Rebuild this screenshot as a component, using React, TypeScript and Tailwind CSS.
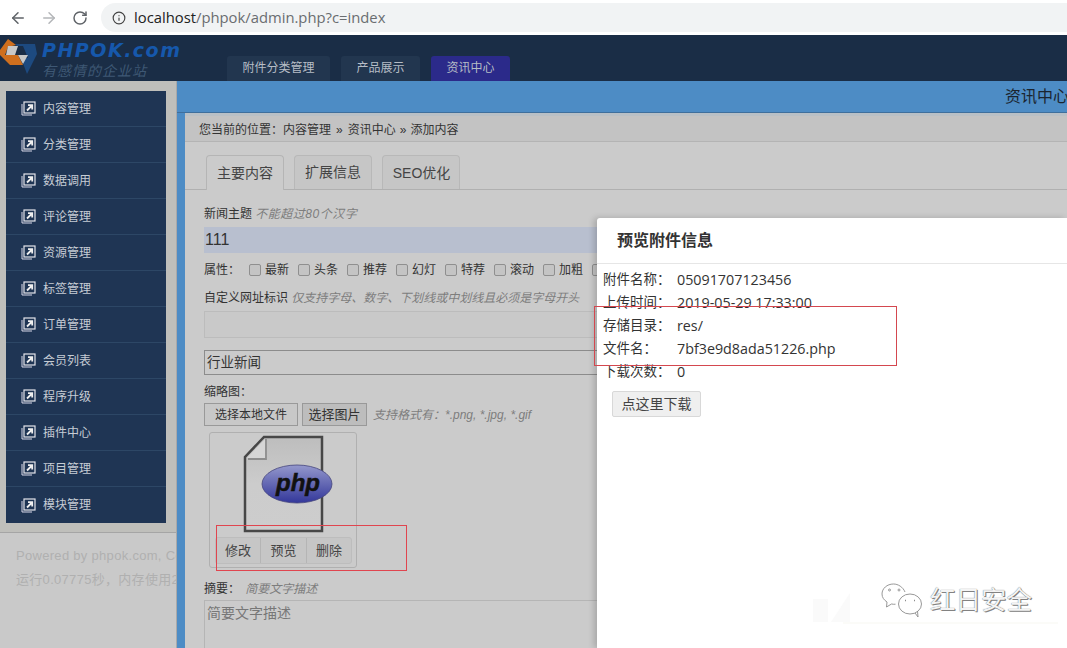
import React from 'react';
import { ArrowLeft, ArrowRight, RotateCw, Info } from 'lucide-react';

const cjk = "font-['Liberation_Sans','Noto_Sans_CJK_SC',sans-serif]";

const menuItems = ['内容管理', '分类管理', '数据调用', '评论管理', '资源管理', '标签管理', '订单管理', '会员列表', '程序升级', '插件中心', '项目管理', '模块管理'];
const attrs = ['最新', '头条', '推荐', '幻灯', '特荐', '滚动', '加粗', ''];
const infoRows = [
  ['附件名称：', '05091707123456'],
  ['上传时间：', '2019-05-29 17:33:00'],
  ['存储目录：', 'res/'],
  ['文件名：', '7bf3e9d8ada51226.php'],
  ['下载次数：', '0'],
];

// little box-with-arrow used by the side menu
const MenuIcon = () => (
  <svg width="15" height="15" viewBox="0 0 15 15" className="shrink-0">
    <path d="M1 3v11h10" fill="none" stroke="#d8d8e8" strokeWidth="1" />
    <rect x="3" y="1" width="11" height="11" fill="#1f3554" stroke="#e4e4ec" strokeWidth="1.2" />
    <path d="M6 9.5 10.5 5M7 4.2h4.2v4.2" fill="none" stroke="#f0f0f0" strokeWidth="1.8" />
  </svg>
);

const Logo = () => (
  <svg width="38" height="44" viewBox="0 0 38 44" className="shrink-0">
    <path d="M15 9H35L37 19 27 39 21 23H28L23 11H17Z" fill="#1d4a80" />
    <path d="M0 15 8 4 16 10 8 12 5 20 0 20Z" fill="#cf6f1e" />
    <path d="M8 11H18L15 20H6Z" fill="#c8c8c8" />
    <path d="M0 20H18L23 30H10Z" fill="#cf6f1e" />
    <path d="M18 20H28L23 29Z" fill="#c8c8c8" />
  </svg>
);

const PhpFile = () => (
  <svg width="90" height="102" viewBox="0 0 90 102">
    <defs>
      <linearGradient id="oval" x1="0" y1="0" x2="0" y2="1">
        <stop offset="0" stopColor="#9498cc" />
        <stop offset="1" stopColor="#33379a" />
      </linearGradient>
      <linearGradient id="sheet" x1="0" y1="0" x2="0" y2="1">
        <stop offset="0" stopColor="#bdbdbd" />
        <stop offset="0.5" stopColor="#cccccc" />
        <stop offset="1" stopColor="#cdcdcd" />
      </linearGradient>
    </defs>
    <path d="M21 2H79V96H2V22Z" fill="url(#sheet)" stroke="#474747" strokeWidth="2.500" />
    <path d="M22 4V23H4Z" fill="#d6d6d6" />
    <path d="M23 4V24H5" fill="none" stroke="#8e8e8e" strokeWidth="1.800" />
    <ellipse cx="54" cy="49" rx="35" ry="19" fill="url(#oval)" stroke="#45457c" strokeWidth="0.800" />
    <text x="55" y="56" textAnchor="middle" fontFamily="'Liberation Sans', sans-serif" fontSize="24" fontWeight="700" fontStyle="italic" fill="#111" stroke="#111" strokeWidth="0.500">php</text>
  </svg>
);

const WeChat = () => (
  <svg width="42" height="36" viewBox="0 0 42 36" fill="none" stroke="#8c8c8c" strokeWidth="0.900">
    <path d="M24 9C22 4 17 1 12.500 1 6 1 1 5.500 1 11c0 3.500 2 6 5 8l-.5 5 5-3c1.500.3 3 .4 4 .2" />
    <ellipse cx="29" cy="21" rx="11.500" ry="10" />
    <path d="M34 30l3 4-.5-6" />
    <circle cx="8.500" cy="7" r="1" />
    <circle cx="18" cy="7" r="1" />
    <path d="M24 17.500h1M33 17.500h1" strokeWidth="1.500" />
  </svg>
);

export default function App() {
  return (
    <div className={`${cjk} relative flex h-[648px] w-[1067px] flex-col overflow-hidden bg-white text-[13px]`}>
      {/* Browser bar */}
      <div className="flex h-[35px] shrink-0 items-center bg-white">
        <ArrowLeft size={18} strokeWidth={2} className="ml-[9px] text-[#5f6368]" />
        <ArrowRight size={18} strokeWidth={2} className="ml-[13px] text-[#b4b6b9]" />
        <RotateCw size={16} strokeWidth={2.200} className="ml-[14px] text-[#5f6368]" />
        <div className="ml-[13px] flex h-[29px] flex-1 items-center rounded-l-full bg-[#f1f3f4] pl-[11px]">
          <Info size={14} strokeWidth={2} className="text-[#444]" />
          <span className="ml-[8px] font-['Open_Sans','Liberation_Sans',sans-serif] text-[14.800px] text-[#6a6d70]">
            <span className="text-[#222]">localhost</span>/phpok/admin.php?c=index
          </span>
        </div>
      </div>

      {/* Header */}
      <div className="flex h-[46px] shrink-0 bg-[#1a2d46]">
        <div className="flex w-[227px] shrink-0 items-start">
          <Logo />
          <div className="ml-[4px] mt-[3px]">
            <div className="font-['DejaVu_Sans',sans-serif] text-[19px] font-bold italic leading-[24px] tracking-[1.500px] text-[#1658ac]">PHPOK.com</div>
            <div className="text-[14px] italic leading-[18px] tracking-[1px] text-[#3e5874]">有感情的企业站</div>
          </div>
        </div>
        <div className="flex items-end gap-[11px] text-[12px] text-[#b6bdc6]">
          <div className="flex h-[25px] w-[103px] items-center justify-center rounded-t-[3px] bg-[#22364f] pb-[2px]">附件分类管理</div>
          <div className="flex h-[25px] w-[79px] items-center justify-center rounded-t-[3px] bg-[#22364f] pb-[2px]">产品展示</div>
          <div className="flex h-[25px] w-[79px] items-center justify-center rounded-t-[3px] bg-[#2b2a8a] pb-[2px]">资讯中心</div>
        </div>
      </div>

      <div className="flex min-h-0 flex-1">
        {/* Sidebar */}
        <div className="flex w-[177px] shrink-0 flex-col border-r border-[#a9a9a9] bg-[#c9c9c9]">
          <div className="h-[452px] border-b border-[#a5a5a5] bg-[#bfbfbb] px-[6px] pt-[10px]">
            <div className="w-[160px] bg-[#1f3554]">
              {menuItems.map((item, i) => (
                <div key={item} className={`flex h-[36px] items-center gap-[7px] pl-[15px] text-[12px] text-[#c6ccd4] ${i < menuItems.length - 1 ? 'border-b border-[#2d4766]' : ''}`}>
                  <MenuIcon />
                  {item}
                </div>
              ))}
            </div>
          </div>
          <div className="overflow-hidden whitespace-nowrap pl-[16px] pt-[11px] text-[13px] leading-[24px] tracking-[0.300px] text-[#b0b0b0]">
            <div>Powered by phpok.com, Copyright</div>
            <div>运行0.07775秒，内存使用2.91MB</div>
          </div>
        </div>

        {/* Main */}
        <div className="flex min-w-0 flex-1 flex-col bg-[#4d8cc5]">
          <div className="flex h-[32px] shrink-0 items-center justify-end border-b border-[#3f6f9c] text-[16px] text-[#1b2530]">
            <span className="-mr-[2px] whitespace-nowrap">资讯中心</span>
          </div>
          <div className="ml-[8px] flex-1 overflow-hidden border-t-[3px] border-[#b9c0c6] bg-[#cbcbcb]">
            <div className="flex h-[26px] items-center border-b border-[#b4b4b4] bg-[#c3c3c3] pl-[14px] pt-[2px] text-[12px] text-[#333]">
              您当前的位置：内容管理
              <span className="mx-[5px]">»</span>
              资讯中心
              <span className="mx-[4px]">»</span>
              添加内容
            </div>
            <div className="flex h-[48px] items-end gap-[10px] border-b border-[#b0b0b0] pl-[21px] text-[14px] text-[#444]">
              <div className="-mb-px flex h-[35px] w-[78px] items-center justify-center rounded-t-[4px] border border-b-0 border-[#b5b5b5] bg-[#cbcbcb]">主要内容</div>
              <div className="flex h-[34px] w-[78px] items-center justify-center rounded-t-[4px] border border-b-0 border-[#b8b8b8] bg-[#c6c6c6]">扩展信息</div>
              <div className="flex h-[34px] w-[78px] items-center justify-center rounded-t-[4px] border border-b-0 border-[#b8b8b8] bg-[#c6c6c6] pl-[1px] pt-[1px]">SEO优化</div>
            </div>

            <div className="pl-[19px] text-[12px] text-[#333]">
              <div className="mt-[16px] h-[21px] leading-[16px]">
                新闻主题 <i className="tracking-[0.500px] text-[#7d7d7d]">不能超过80个汉字</i>
              </div>
              <div className="flex h-[26px] items-center bg-[#b8bfcf] pl-[1px] text-[16px] text-[#333]">111</div>
              <div className="mt-[9px] flex h-[16px] items-center">
                <span className="w-[45px]">属性：</span>
                {attrs.map((a, i) => (
                  <span key={i} className="mr-[6px] flex w-[43px] items-center gap-[4px] whitespace-nowrap">
                    <span className="h-[12px] w-[12px] shrink-0 rounded-[2px] border border-[#8f8f8f] bg-[#c4c4c4]" />
                    {a}
                  </span>
                ))}
              </div>
              <div className="mt-[13px] h-[20px] leading-[14px]">
                自定义网址标识 <i className="text-[#7d7d7d]">仅支持字母、数字、下划线或中划线且必须是字母开头</i>
              </div>
              <div className="h-[27px] border border-[#bcbcbc] bg-[#c9c9c9]" />
              <div className="mt-[12px] flex h-[25px] items-center border border-[#8c8c8c] bg-[#cbcbcb] pl-[2px] pt-[1px] text-[13.500px]">行业新闻</div>
              <div className="mt-[9px] h-[19px] leading-[16px]">缩略图：</div>
              <div className="flex items-center">
                <div className="flex h-[23px] w-[94px] items-center justify-center border border-[#999] bg-[#c8c8c8]">选择本地文件</div>
                <div className="ml-[4px] flex h-[23px] w-[65px] items-center justify-center border border-[#999] bg-[#bdbdbd] text-[13px]">选择图片</div>
                <i className="ml-[6px] text-[#7d7d7d]">支持格式有：*.png, *.jpg, *.gif</i>
              </div>
              <div className="ml-[5px] mt-[6px] h-[136px] w-[148px] rounded-[3px] border border-[#b0b0b0] pl-[5px]">
                <div className="h-[104px] pl-[28px] pt-[2px]">
                  <PhpFile />
                </div>
                <div className="flex h-[27px] w-[137px] rounded-[3px] border border-[#bdbdbd] bg-[#c6c6c6] text-[13px] text-[#444]">
                  <div className="flex w-[45px] items-center justify-center border-r border-[#b5b5b5]">修改</div>
                  <div className="flex w-[46px] items-center justify-center border-r border-[#b5b5b5]">预览</div>
                  <div className="flex flex-1 items-center justify-center">删除</div>
                </div>
              </div>
              <div className="mt-[14px] h-[18px] leading-[14px]">
                摘要： <i className="ml-[2px] text-[#7d7d7d]">简要文字描述</i>
              </div>
              <div className="h-[60px] border border-[#b5b5b5] pl-[2px] pt-[2px] text-[14px] leading-[20px] text-[#777]">简要文字描述</div>
            </div>
          </div>
        </div>
      </div>

      {/* Preview dialog */}
      <div className="absolute left-[597px] top-[218px] h-[430px] w-[470px] rounded-tl-[3px] bg-white shadow-[-3px_0_6px_rgba(0,0,0,0.18)]">
        <div className="flex h-[46px] items-center border-b border-[#e6e6e6] pl-[20px] pt-[1px] text-[16px] font-bold text-[#333]">预览附件信息</div>
        <div className="pl-[6px] pt-[4px] text-[14px] text-[#333]">
          {infoRows.map(([label, value]) => (
            <div key={label} className="flex h-[23px] items-center leading-[20px]">
              <span className="w-[74px] shrink-0 text-[13.500px]">{label}</span>
              <span className="font-['Open_Sans','Liberation_Sans',sans-serif] text-[14.300px]">{value}</span>
            </div>
          ))}
          <div className="ml-[9px] mt-[8px] flex h-[26px] w-[89px] items-center justify-center rounded-[2px] border border-[#d8d8d8] bg-[#efefef] text-[14px] text-[#444]">点这里下载</div>
        </div>
        {/* Watermark */}
        <svg width="250" height="40" viewBox="0 0 250 40" className="absolute left-[216px] top-[372px]">
          <path d="M0 9H15V32H0ZM18 32 37 3V32Z" fill="#fafafa" />
          <path d="M30 33H245" stroke="#fafaf6" strokeWidth="1.500" />
        </svg>
        <div className="absolute left-[284px] top-[365px] flex items-center gap-[7px]">
          <WeChat />
          <span className="-mt-[2px] text-[25.500px] leading-[30px] text-[#f4f4f4] [text-shadow:0_0_1px_#555,1px_1px_0_#888]">红日安全</span>
        </div>
      </div>

      {/* Red annotation boxes */}
      <div className="absolute left-[594px] top-[306px] h-[60px] w-[303px] border border-[#d4474f]" />
      <div className="absolute left-[216px] top-[525px] h-[46px] w-[191px] border border-[#e0454f]" />
    </div>
  );
}
